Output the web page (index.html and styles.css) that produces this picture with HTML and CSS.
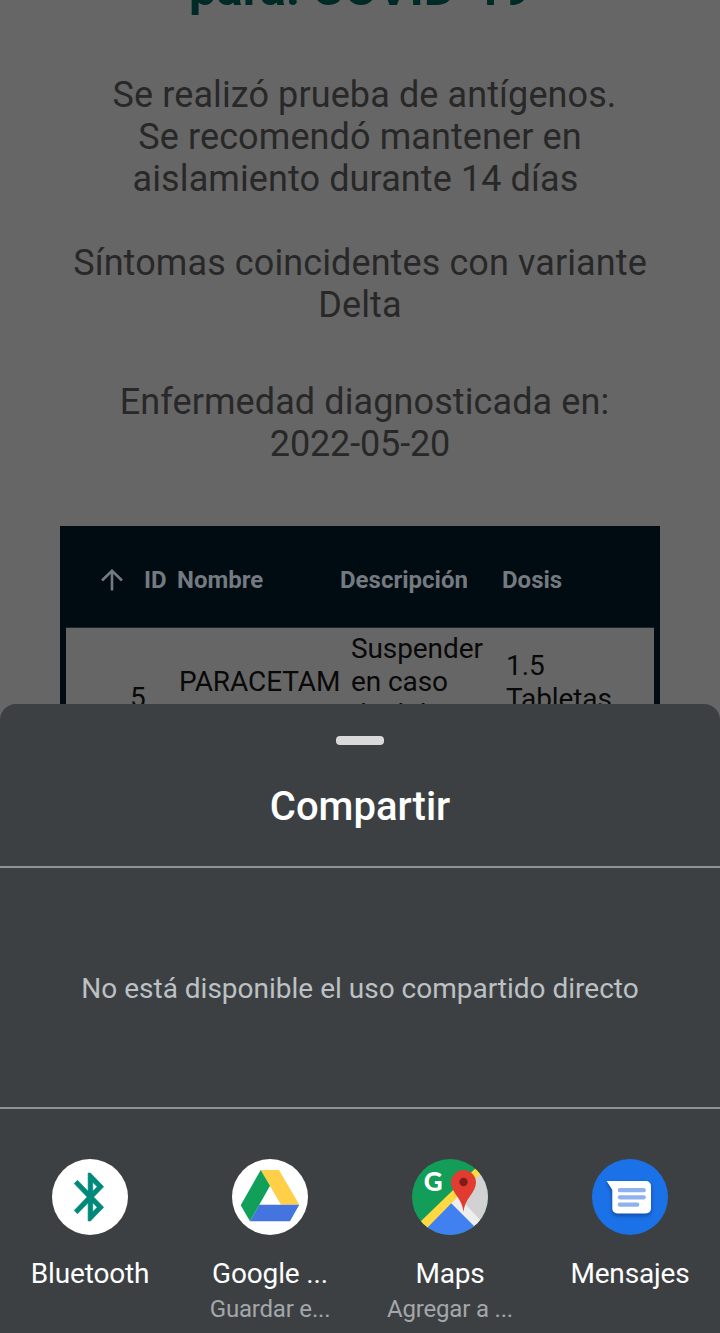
FILE: index.html
```html
<!DOCTYPE html>
<html lang="es">
<head>
<meta charset="utf-8">
<title>Compartir</title>
<link rel="stylesheet" href="styles.css">
</head>
<body>
<main class="page">
  <h1 class="title">para: COVID-19</h1>
  <p class="note">&nbsp;Se realizó prueba de antígenos.<br>Se recomendó mantener en<br>aislamiento durante 14 días&nbsp;</p>
  <p class="note">Síntomas coincidentes con variante<br>Delta</p>
  <p class="note diagnosed">&nbsp;Enfermedad diagnosticada en:<br><span class="date">2022-05-20</span></p>
  <section class="table">
    <div class="row head">
      <span class="id"><svg class="arrow" viewBox="0 0 22 22"><path d="M11 21.500V2M1 11.500 11 1.800l10 9.700"/></svg>ID</span>
      <span>Nombre</span><span>Descripción</span><span>Dosis</span>
    </div>
    <div class="row body">
      <span class="num">5</span>
      <span class="name">PARACETAM<br>OL</span>
      <span class="desc">Suspender<br>en caso<br>de dolor</span>
      <span class="dose">1.5<br>Tabletas</span>
    </div>
  </section>
</main>
<section class="sheet">
  <header class="sheet-head">
    <div class="handle"></div>
    <h2 class="sheet-title">Compartir</h2>
  </header>
  <div class="direct"><span>No está disponible el uso compartido directo</span></div>
  <div class="apps">
    <div class="app">
      <svg class="icon" viewBox="0 0 76 76"><circle cx="38" cy="38" r="38" fill="#fff"/><path transform="translate(10.600 9.200) scale(2.320 2.400)" fill="#00897b" stroke="#00897b" stroke-width="0.250" d="M17.710 7.710L12 2h-1v7.590L6.410 5 5 6.410 10.590 12 5 17.590 6.410 19 11 14.410V22h1l5.710-5.710-4.300-4.290 4.300-4.290zM13 5.830l1.880 1.880L13 9.590V5.830zm1.880 10.460L13 18.170v-3.760l1.880 1.880z"/></svg>
      <span class="label">Bluetooth</span>
    </div>
    <div class="app">
      <svg class="icon" viewBox="0 0 76 76"><circle cx="38" cy="38" r="38" fill="#fff"/><path fill="#ffcf48" d="M28.700 11H47l20.300 34.700H49z"/><path fill="#4374e0" d="M27.300 45.700h40L58 62.300H18z"/><path fill="#11a05a" d="M28.700 11 38 26.700 18 62.300 8.700 46.300z"/></svg>
      <span class="label">Google ...</span>
      <span class="sub">Guardar e...</span>
    </div>
    <div class="app">
      <svg class="icon" viewBox="0 0 76 76">
        <defs><clipPath id="disc"><circle cx="38" cy="38" r="38"/></clipPath></defs>
        <g clip-path="url(#disc)">
          <path fill="#129d58" d="M0 0h76v76H0z"/>
          <path fill="#d2d2d2" d="M76 5 38 39l32 32 6-5z"/>
          <path fill="#eee" d="m44 35 25 27-7 7-26-26z"/>
          <path fill="#4080f0" d="M38 43 10 71v5h56l-4-9z"/>
          <path fill="#ffd842" d="M7 64 67 6l5 5L15 69z"/>
          <path fill="#e23b30" d="M51.500 53c-1-8-3.500-11.500-7-16.500-3-4.500-5.500-8.500-5.500-13a12.500 12.500 0 0 1 25 0c0 4.500-2.500 8.500-5.500 13-3.500 5-6 8.500-7 16.500z"/>
          <circle cx="51.500" cy="23" r="4.200" fill="#7d1c18"/>
          <text class="g" x="11.800" y="31.800">G</text>
        </g>
      </svg>
      <span class="label">Maps</span>
      <span class="sub">Agregar a ...</span>
    </div>
    <div class="app">
      <svg class="icon" viewBox="0 0 76 76"><circle cx="38" cy="38" r="38" fill="#1b72e8"/><path class="bubble" fill="#fff" d="M14.700 22H54a5 5 0 0 1 5 5v22.500a5 5 0 0 1-5 5H25.300a5 5 0 0 1-5-5V31z"/><path stroke="#8fb1ee" stroke-width="4.200" stroke-linecap="round" d="M27.800 31.200h24M27.800 38.300h24M27.800 45.700h17.500"/></svg>
      <span class="label">Mensajes</span>
    </div>
  </div>
</section>
</body>
</html>
```
FILE: styles.css
```css
* { box-sizing: border-box; }
body {
  margin: 0;
  width: 720px;
  height: 1333px;
  position: relative;
  overflow: hidden;
  background: #666;
  font-family: Roboto, "Liberation Sans", sans-serif;
}
.page { height: 720px; overflow: hidden; text-align: center; }
.title {
  margin: -39px 0 57px;
  font-size: 49px;
  line-height: 56px;
  font-weight: 700;
  color: #002a26;
  white-space: nowrap;
}
.note {
  margin: 0 0 42px;
  font-size: 36px;
  line-height: 42px;
  letter-spacing: 0.1px;
  color: #282828;
  white-space: nowrap;
}
.date { letter-spacing: -0.15px; }
.diagnosed { margin: 55px 0 61px; }
.table {
  margin: 0 60px;
  height: 300px;
  background: #000b12;
  padding: 0 6px;
  text-align: left;
}
.row {
  display: grid;
  grid-template-columns: 111px 163px 162px 1fr;
}
.head {
  height: 102px;
  padding-top: 6px;
  align-items: center;
  border-bottom: 1px solid #1c2830;
  color: #747a80;
  font-size: 24px;
  font-weight: 700;
  white-space: nowrap;
}
.id { display: flex; align-items: center; padding-left: 35px; gap: 21px; }
.arrow { width: 22px; height: 22px; fill: none; stroke: #747a80; stroke-width: 2.6; }
.body {
  height: 198px;
  background: #666;
  color: #090909;
  font-size: 28px;
  line-height: 33px;
  letter-spacing: -0.1px;
  white-space: nowrap;
}
.num { padding: 53px 0 0 64px; }
.name { padding: 37px 0 0 2px; }
.desc { padding: 4px 0 0 11px; }
.dose { padding: 21px 0 0 4px; }
.sheet {
  position: absolute;
  left: 0;
  right: 0;
  bottom: 0;
  height: 629px;
  background: #3c4043;
  border-radius: 16px 16px 0 0;
}
.sheet-head {
  height: 164px;
  padding-top: 32px;
  border-bottom: 2px solid #909395;
  display: flex;
  flex-direction: column;
  align-items: center;
}
.handle { width: 48px; height: 9px; border-radius: 4px; background: #dadada; }
.sheet-title { margin: 38px 0 0; font-size: 40px; line-height: 48px; font-weight: 500; color: #fff; }
.direct {
  height: 241px;
  padding-top: 1px;
  display: flex;
  align-items: center;
  justify-content: center;
  border-bottom: 2px solid #909395;
  color: #bdc1c4;
  font-size: 28px;
}
.apps { display: grid; grid-template-columns: repeat(4, 180px); padding-top: 50px; }
.app { display: flex; flex-direction: column; align-items: center; white-space: nowrap; }
.icon { width: 76px; height: 76px; display: block; }
.label { margin-top: 22px; font-size: 28px; line-height: 34px; letter-spacing: -0.15px; color: #fff; }
.sub { margin-top: 3px; font-size: 24px; line-height: 30px; letter-spacing: -0.2px; color: #a4a7a9; }
.g { font-family: Lato, sans-serif; font-size: 26px; font-weight: 900; fill: #fff; }
.bubble { filter: drop-shadow(0 2px 2px rgba(0, 30, 90, 0.5)); }
```
